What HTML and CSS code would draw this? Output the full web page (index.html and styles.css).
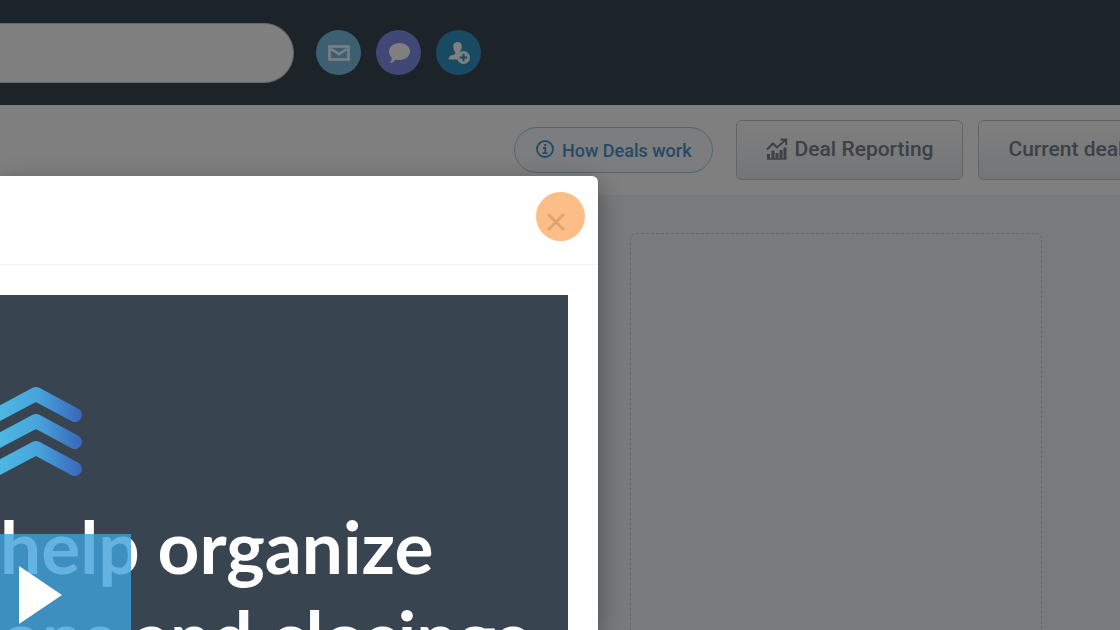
FILE: index.html
```html
<!DOCTYPE html>
<html lang="en">
<head>
    <meta charset="UTF-8">
    <meta name="viewport" content="width=device-width, initial-scale=1.0">
    <title>Deals</title>
    <link rel="stylesheet" href="styles.css">
</head>
<body>
    <header class="top-bar">
        <input class="search" type="search" aria-label="Search">
        <button class="round-btn mail" aria-label="Email">
            <svg width="22" height="16" viewBox="0 0 22 16" fill="none" stroke="#fff" stroke-width="2.6">
                <path d="M1.500 1.500h19v13h-19z"/>
                <path d="M3 4l8 5 8-5"/>
            </svg>
        </button>
        <button class="round-btn chat" aria-label="Messages">
            <svg width="22" height="20" viewBox="0 0 22 20" fill="#fff">
                <path d="M11.500 0C17.300 0 22 3.800 22 8.500S17.300 17 11.500 17c-1.300 0-2.600-.2-3.700-.6C6.300 18.400 4.200 19.700 1.800 20c1.200-1.600 1.900-3.300 2-5.200C1.900 13.200 1 11 1 8.500 1 3.800 5.700 0 11.500 0z"/>
            </svg>
        </button>
        <button class="round-btn person" aria-label="Add contact">
            <svg width="22" height="22" viewBox="0 0 22 22" fill="#fff">
                <path d="M9.500 0c2.700 0 4.300 2 4.300 4.800 0 2.200-.9 4.300-2.300 5.500v2L9 17.500H.5c0-2.500 1.200-3.600 3.500-4.300 2-.6 3.300-.9 3.300-2v-1C6 9 5.200 7 5.200 4.800 5.200 2 6.800 0 9.500 0z"/>
                <circle cx="15.500" cy="15.500" r="6.500"/>
                <path class="plus" d="M11.800 15.500h7.400M15.500 11.800v7.400"/>
            </svg>
        </button>
    </header>

    <nav class="action-bar">
        <a class="how-link" href="#">
            <svg width="20" height="20" viewBox="0 0 20 20" fill="none" stroke="currentColor" stroke-width="1.800">
                <circle cx="10" cy="9" r="8"/>
                <path d="M8 8h2.300v5M7.500 13.200h5M9.200 5h2"/>
            </svg>
            How Deals work
        </a>
        <button class="btn">
            <svg width="22" height="22" viewBox="0 0 22 22" fill="none" stroke="currentColor">
                <path stroke-width="2" d="M1 11.500l6-6 4 4L19.500 2M14.500 1.500h5.700v5.500"/>
                <path stroke-width="3" d="M2.500 21v-5M7 21V12.500M11 21v-6M15 21v-9M19 21V9.500"/>
                <path stroke-width="1.500" d="M1 21h19.500"/>
            </svg>
            Deal Reporting
        </button>
        <button class="btn">Current deals</button>
    </nav>

    <main class="board">
        <div class="drop-column"></div>
    </main>

    <div class="overlay">
        <div class="modal" role="dialog" aria-label="How Deals work">
            <div class="modal-header">
                <button class="close-btn" aria-label="Close">
                    <svg width="18" height="18" viewBox="0 0 18 18" stroke="#dda574" stroke-width="3">
                        <path d="M1 1l16 16M17 1L1 17"/>
                    </svg>
                </button>
            </div>
            <div class="video">
                <svg class="logo" width="84" height="92" viewBox="0 0 84 92" fill="none" stroke="url(#blue)" stroke-width="14" stroke-linecap="round" stroke-linejoin="round">
                    <defs>
                        <linearGradient id="blue" gradientUnits="userSpaceOnUse" x1="0" y1="0" x2="84" y2="0">
                            <stop offset="0" stop-color="#4cb8e2"/>
                            <stop offset=".45" stop-color="#48a4dc"/>
                            <stop offset="1" stop-color="#3763b8"/>
                        </linearGradient>
                    </defs>
                    <path d="M-11 34L36 9l39 21"/>
                    <path d="M-11 61L36 36l39 21"/>
                    <path d="M-11 88L36 63l39 21"/>
                </svg>
                <p class="headline">help organize<br>ons and closings</p>
                <button class="play-btn" aria-label="Play video">
                    <svg width="43" height="58" viewBox="0 0 43 58" fill="#fff">
                        <path d="M0 0l43 29L0 58z"/>
                    </svg>
                </button>
            </div>
        </div>
    </div>
</body>
</html>
```
FILE: styles.css
```css
* {
    box-sizing: border-box;
}
body {
    margin: 0;
    height: 100vh;
    display: flex;
    flex-direction: column;
    overflow: hidden;
    font-family: "Roboto", sans-serif;
    background: #f2f4f8;
}
button {
    border: none;
    padding: 0;
    font-family: inherit;
    cursor: pointer;
}

/* Top bar */
.top-bar {
    display: flex;
    align-items: center;
    gap: 15px;
    height: 105px;
    flex-shrink: 0;
    background: #384652;
}
.search {
    width: 294px;
    height: 60px;
    margin-right: 7px;
    padding: 0 30px;
    border: 1px solid #ccc;
    border-left: none;
    border-radius: 0 30px 30px 0;
    background: #fff;
    font-size: 20px;
}
.round-btn {
    display: flex;
    align-items: center;
    justify-content: center;
    width: 45px;
    height: 45px;
    border-radius: 50%;
}
.mail {
    background: #78c0e4;
}
.chat {
    background: #8490ec;
}
.person {
    background: #3294c8;
}
.plus {
    fill: none;
    stroke: #3294c8;
    stroke-width: 2;
}

/* Action bar */
.action-bar {
    display: flex;
    align-items: center;
    gap: 15px;
    height: 90px;
    flex-shrink: 0;
    padding-left: 514px;
    overflow: hidden;
    background: #fff;
}
.how-link {
    display: flex;
    align-items: center;
    flex-shrink: 0;
    gap: 7px;
    height: 46px;
    margin-right: 8px;
    padding: 0 20px;
    border: 1px solid #a4cce2;
    border-radius: 23px;
    background: #f6fbfe;
    color: #4a94cc;
    font-size: 18px;
    font-weight: 500;
    text-decoration: none;
    white-space: nowrap;
}
.btn {
    display: flex;
    align-items: center;
    flex-shrink: 0;
    gap: 7px;
    height: 60px;
    padding: 0 29px 2px;
    border: 1px solid #c4c8cc;
    border-radius: 6px;
    background: linear-gradient(#fff, #e8ebef);
    color: #78828c;
    font-size: 21px;
    font-weight: 500;
    white-space: nowrap;
}

/* Board */
.board {
    flex: 1;
    display: flex;
    justify-content: flex-end;
    padding: 38px 78px 0 0;
}
.drop-column {
    width: 412px;
    border: 1px dashed #ccd0d4;
    border-bottom: none;
    border-radius: 6px 6px 0 0;
}

/* Modal */
.overlay {
    position: absolute;
    inset: 0;
    display: flex;
    padding: 176px 522px 0 0;
    overflow: hidden;
    background: rgba(0, 0, 0, 0.5);
}
.modal {
    flex: 1;
    min-width: 0;
    display: flex;
    flex-direction: column;
    border-radius: 0 6px 0 0;
    background: #fff;
    box-shadow: 0 8px 24px rgba(0, 0, 0, 0.4);
}
.modal-header {
    display: flex;
    justify-content: flex-end;
    height: 89px;
    flex-shrink: 0;
    padding: 16px 13px;
    border-bottom: 1px solid #f4f4f4;
}
.close-btn {
    display: flex;
    align-items: center;
    width: 49px;
    height: 49px;
    padding: 10px 0 0 11px;
    border-radius: 50%;
    background: #fcbd86;
}
.video {
    position: relative;
    flex: 1;
    margin: 30px 30px 0 0;
    padding-top: 90px;
    overflow: hidden;
    background: #384550;
}
.logo {
    display: block;
}
.headline {
    margin: 24px 0 0;
    color: #fff;
    font-family: "Lato", sans-serif;
    font-size: 73px;
    font-weight: 700;
    line-height: 90px;
    white-space: nowrap;
}
.play-btn {
    position: absolute;
    left: 0;
    top: 239px;
    display: flex;
    align-items: center;
    width: 131px;
    height: 122px;
    padding-left: 19px;
    background: rgba(63, 160, 217, 0.81);
}
```
